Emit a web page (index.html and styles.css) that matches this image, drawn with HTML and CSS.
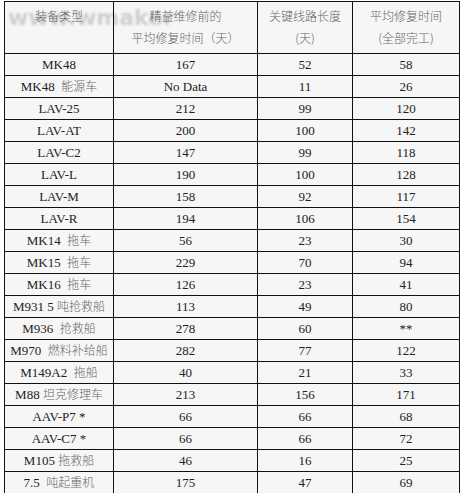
FILE: index.html
```html
<!DOCTYPE html>
<html>
<head>
<meta charset="utf-8">
<link rel="stylesheet" href="styles.css">
</head>
<body>
<div class="wrap">
<div class="watermark">www.wmaker</div>
<table class="grid">
<colgroup><col class="c1"><col class="c2"><col class="c3"><col class="c4"></colgroup>
<thead>
<tr class="head">
<th><span class="zh">装备类型</span></th>
<th><span class="zh">精益维修前的<br>平均修复时间（天）</span></th>
<th><span class="zh">关键线路长度<br>(天)</span></th>
<th><span class="zh">平均修复时间<br>(全部完工)</span></th>
</tr>
</thead>
<tbody>
<tr><td>MK48</td><td>167</td><td>52</td><td>58</td></tr>
<tr><td>MK48 &nbsp;<span class="zh">能源车</span></td><td>No Data</td><td>11</td><td>26</td></tr>
<tr><td>LAV-25</td><td>212</td><td>99</td><td>120</td></tr>
<tr><td>LAV-AT</td><td>200</td><td>100</td><td>142</td></tr>
<tr><td>LAV-C2</td><td>147</td><td>99</td><td>118</td></tr>
<tr><td>LAV-L</td><td>190</td><td>100</td><td>128</td></tr>
<tr><td>LAV-M</td><td>158</td><td>92</td><td>117</td></tr>
<tr><td>LAV-R</td><td>194</td><td>106</td><td>154</td></tr>
<tr><td>MK14 &nbsp;<span class="zh">拖车</span></td><td>56</td><td>23</td><td>30</td></tr>
<tr><td>MK15 &nbsp;<span class="zh">拖车</span></td><td>229</td><td>70</td><td>94</td></tr>
<tr><td>MK16 &nbsp;<span class="zh">拖车</span></td><td>126</td><td>23</td><td>41</td></tr>
<tr><td>M931 5 <span class="zh">吨抢救船</span></td><td>113</td><td>49</td><td>80</td></tr>
<tr><td>M936 &nbsp;<span class="zh">抢救船</span></td><td>278</td><td>60</td><td>**</td></tr>
<tr><td>M970 &nbsp;<span class="zh">燃料补给船</span></td><td>282</td><td>77</td><td>122</td></tr>
<tr><td>M149A2 &nbsp;<span class="zh">拖船</span></td><td>40</td><td>21</td><td>33</td></tr>
<tr><td>M88 <span class="zh">坦克修理车</span></td><td>213</td><td>156</td><td>171</td></tr>
<tr><td>AAV-P7 *</td><td>66</td><td>66</td><td>68</td></tr>
<tr><td>AAV-C7 *</td><td>66</td><td>66</td><td>72</td></tr>
<tr><td>M105 <span class="zh">拖救船</span></td><td>46</td><td>16</td><td>25</td></tr>
<tr><td>7.5 &nbsp;<span class="zh">吨起重机</span></td><td>175</td><td>47</td><td>69</td></tr>
</tbody>
</table>
</div>
</body>
</html>
```

FILE: styles.css
```css
html, body {
  margin: 0;
  padding: 0;
  background: #ffffff;
}
.wrap {
  position: relative;
  padding: 1px 0 0 4px;
}
.grid {
  position: relative;
  border-collapse: collapse;
  table-layout: fixed;
  width: 456px;
  font-family: "Liberation Serif", "Noto Sans CJK SC", serif;
  font-size: 13px;
  color: #222;
}
.c1 { width: 109px; }
.c2 { width: 144px; }
.c3 { width: 95px; }
.c4 { width: 107px; }
.grid th, .grid td {
  border: 1px solid #111;
  padding: 0;
  text-align: center;
  white-space: nowrap;
}
.grid td {
  height: 21px;
  line-height: 16px;
}
.head th {
  height: 52px;
  vertical-align: top;
  font-weight: normal;
  padding-top: 3px;
  line-height: 21px;
  box-sizing: border-box;
}
.zh {
  font-family: "Noto Sans CJK SC", sans-serif;
  font-size: 12px;
  color: #666;
  font-weight: 300;
}
.watermark {
  position: absolute;
  left: 8px;
  top: 5px;
  width: 456px;
  height: 492px;
  background: transparent;
  font-family: "DejaVu Sans", sans-serif;
  font-weight: bold;
  font-size: 22px;
  color: #cfcfcf;
  filter: blur(0.8px);
  pointer-events: none;
}
.wrap::before {
  content: "";
  position: absolute;
  left: 4px;
  top: 1px;
  width: 456px;
  height: 492px;
  background: #f6f6f6;
}
```
